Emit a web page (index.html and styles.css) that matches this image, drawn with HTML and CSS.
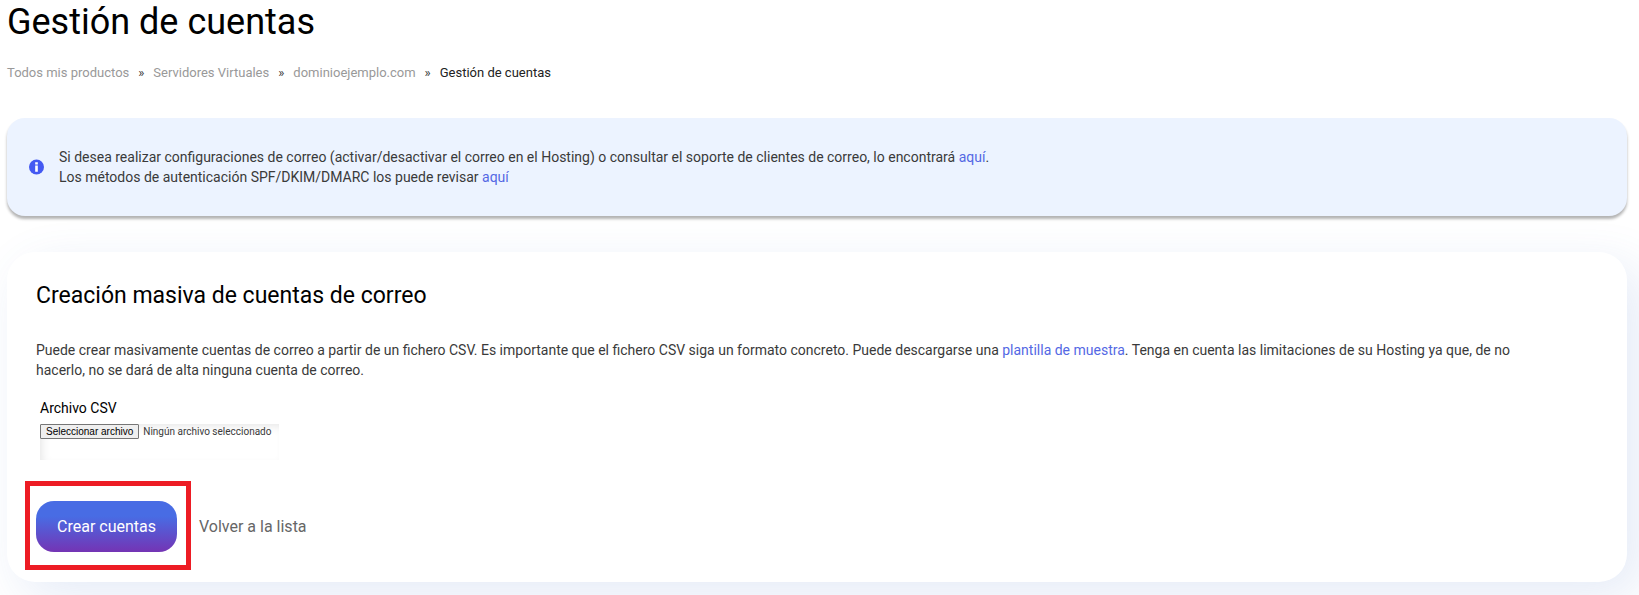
FILE: index.html
```html
<!DOCTYPE html>
<html lang="es">
<head>
  <meta charset="UTF-8" />
  <meta name="viewport" content="width=device-width, initial-scale=1.0"/>
  <title>Gestión de cuentas</title>
  <link rel="stylesheet" href="styles.css">
</head>
<body>
  <header>
    <h1>Gestión de cuentas</h1>
    <nav class="breadcrumb">
      <a href="#">Todos mis productos</a>
      <span>»</span>
      <a href="#">Servidores Virtuales</a>
      <span>»</span>
      <a href="#">dominioejemplo.com</a>
      <span>»</span>
      <span class="current">Gestión de cuentas</span>
    </nav>
  </header>

  <main>
    <div class="notice">
      <svg class="notice-icon" viewBox="0 0 16 16" aria-hidden="true">
        <circle cx="8" cy="8" r="8" fill="#4459f2"/>
        <path d="M6.6 3h2.8v2.2H6.6zM6.6 6.4h2.8v6.6H6.6z" fill="#fff"/>
      </svg>
      <p>
        Si desea realizar configuraciones de correo (activar/desactivar el correo en el Hosting) o consultar el soporte de clientes de correo, lo encontrará <a href="#">aquí</a>.<br>
        Los métodos de autenticación SPF/DKIM/DMARC los puede revisar <a href="#">aquí</a>
      </p>
    </div>

    <section class="card">
      <h2>Creación masiva de cuentas de correo</h2>
      <p>Puede crear masivamente cuentas de correo a partir de un fichero CSV. Es importante que el fichero CSV siga un formato concreto. Puede descargarse una <a href="#">plantilla de muestra</a>. Tenga en cuenta las limitaciones de su Hosting ya que, de no hacerlo, no se dará de alta ninguna cuenta de correo.</p>

      <form>
        <div class="field">
          <label for="csv">Archivo CSV</label>
          <div class="file-box">
            <span class="file-btn">Seleccionar archivo</span>
            <span class="file-name">Ningún archivo seleccionado</span>
            <input type="file" id="csv" accept=".csv">
          </div>
        </div>

        <div class="actions">
          <div class="highlight">
            <button type="submit">Crear cuentas</button>
          </div>
          <a class="back" href="#">Volver a la lista</a>
        </div>
      </form>
    </section>
  </main>
</body>
</html>
```
FILE: styles.css
```css
* {
  box-sizing: border-box;
}

body {
  font-family: Roboto, sans-serif;
  font-size: 14px;
  line-height: 20px;
  color: #3a3a3a;
  background: #fff;
  margin: 0;
  padding: 0 12px 13px 7px;
}

h1, h2, p {
  margin: 0;
}

h1, h2 {
  color: #000;
  font-weight: 400;
}

a {
  color: #5468e4;
  text-decoration: none;
}

h1 {
  font-size: 36px;
  line-height: 44px;
}

.breadcrumb {
  display: flex;
  gap: 9px;
  margin-top: 19px;
  font-size: 13px;
}

.breadcrumb a {
  color: #999;
}

.breadcrumb .current {
  color: #222;
}

.notice {
  display: flex;
  align-items: center;
  gap: 15px;
  margin-top: 35px;
  padding: 29px 22px;
  background: #ecf3ff;
  border-radius: 18px;
  box-shadow: 0 3px 3px rgba(0, 0, 0, 0.3);
}

.notice-icon {
  flex: none;
  width: 15px;
  height: 16px;
}

.card {
  margin-top: 36px;
  padding: 29px 29px 30px;
  background: #fff;
  border-radius: 28px;
  box-shadow: 15px 15px 50px rgba(70, 110, 200, 0.14);
}

.card h2 {
  margin-bottom: 29px;
  font-size: 23px;
  line-height: 30px;
}

.card p {
  padding-right: 75px;
}

.field {
  padding: 18px 4px 0;
}

.field label {
  display: block;
  color: #000;
}

.file-box {
  position: relative;
  display: flex;
  align-items: flex-start;
  gap: 4px;
  width: 239px;
  height: 36px;
  margin-top: 6px;
  font-size: 10px;
  line-height: 13px;
  box-shadow: inset 4px 4px 10px -2px rgba(0, 0, 0, 0.1);
}

.file-btn {
  padding: 0 5px;
  font-family: "Liberation Sans", Arial, sans-serif;
  color: #000;
  background: #efefef;
  border: 1px solid #767676;
  border-radius: 1px;
}

.file-name {
  padding-top: 1px;
}

/* the real input lies over the drawn one */
.file-box input {
  position: absolute;
  inset: 0;
  width: 100%;
  opacity: 0;
  cursor: pointer;
}

.actions {
  display: flex;
  align-items: center;
  gap: 22px;
  margin-top: 41px;
  font-size: 16px;
}

.highlight {
  position: relative;
}

.highlight::before {
  content: "";
  position: absolute;
  inset: -20px -14px -18px -11px;
  border: 5px solid #ed1c24;
  pointer-events: none;
}

button {
  display: block;
  height: 51px;
  padding: 0 21px;
  font: inherit;
  color: #fff;
  background: linear-gradient(#486ce4 30%, #7434b4);
  border: none;
  border-radius: 18px;
  cursor: pointer;
}

.back {
  color: #666;
}
```
